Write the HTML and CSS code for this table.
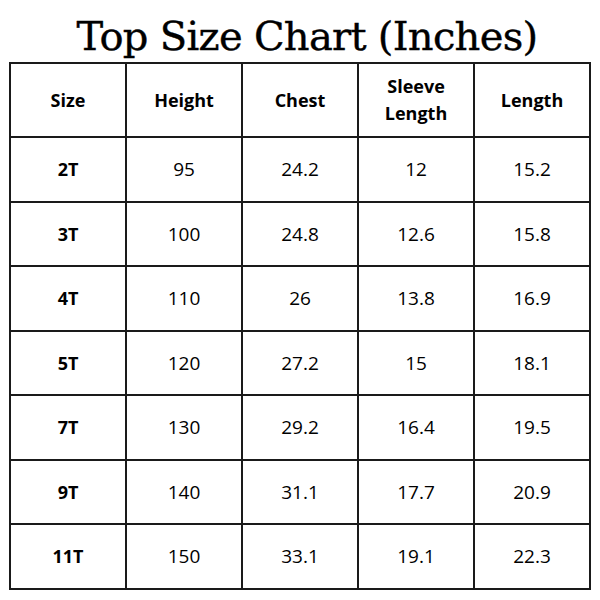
FILE: index.html
```html
<!DOCTYPE html>
<html>
<head>
<meta charset="utf-8">
<link rel="stylesheet" href="styles.css">
</head>
<body>
<div class="page">
  <h1 class="title">Top Size Chart (Inches)</h1>
  <table class="chart">
    <thead>
      <tr><th>Size</th><th>Height</th><th>Chest</th><th>Sleeve<br>Length</th><th>Length</th></tr>
    </thead>
    <tbody>
      <tr><td class="size">2T</td><td>95</td><td>24.2</td><td>12</td><td>15.2</td></tr>
      <tr><td class="size">3T</td><td>100</td><td>24.8</td><td>12.6</td><td>15.8</td></tr>
      <tr><td class="size">4T</td><td>110</td><td>26</td><td>13.8</td><td>16.9</td></tr>
      <tr><td class="size">5T</td><td>120</td><td>27.2</td><td>15</td><td>18.1</td></tr>
      <tr><td class="size">7T</td><td>130</td><td>29.2</td><td>16.4</td><td>19.5</td></tr>
      <tr><td class="size">9T</td><td>140</td><td>31.1</td><td>17.7</td><td>20.9</td></tr>
      <tr><td class="size">11T</td><td>150</td><td>33.1</td><td>19.1</td><td>22.3</td></tr>
    </tbody>
  </table>
</div>
</body>
</html>
```
FILE: styles.css
```css
html, body {
  margin: 0;
  padding: 0;
  background: #ffffff;
}
.page {
  width: 600px;
  height: 600px;
  padding-top: 15px;
  box-sizing: border-box;
}
.title {
  margin: 0 0 5px 0;
  padding-left: 14px;
  text-align: center;
  font-family: "DejaVu Serif", "Liberation Serif", serif;
  font-weight: normal;
  font-size: 40px;
  line-height: 42px;
  color: #000;
  letter-spacing: -0.7px;
  -webkit-text-stroke: 0.4px #000;
}
.chart {
  margin-left: 9px;
  width: 582px;
  border-collapse: collapse;
  table-layout: fixed;
  font-family: "Open Sans", "Liberation Sans", sans-serif;
  color: #000;
}
.chart th, .chart td {
  border: 2px solid #1a1a1a;
  text-align: center;
  padding: 0;
}
.chart th {
  height: 72px;
  font-size: 18px;
  font-weight: 700;
  line-height: 27px;
}
.chart td {
  height: 62.5px;
  font-size: 19px;
  font-weight: 400;
}
.chart td.size {
  font-weight: 700;
  font-size: 18px;
}
```
